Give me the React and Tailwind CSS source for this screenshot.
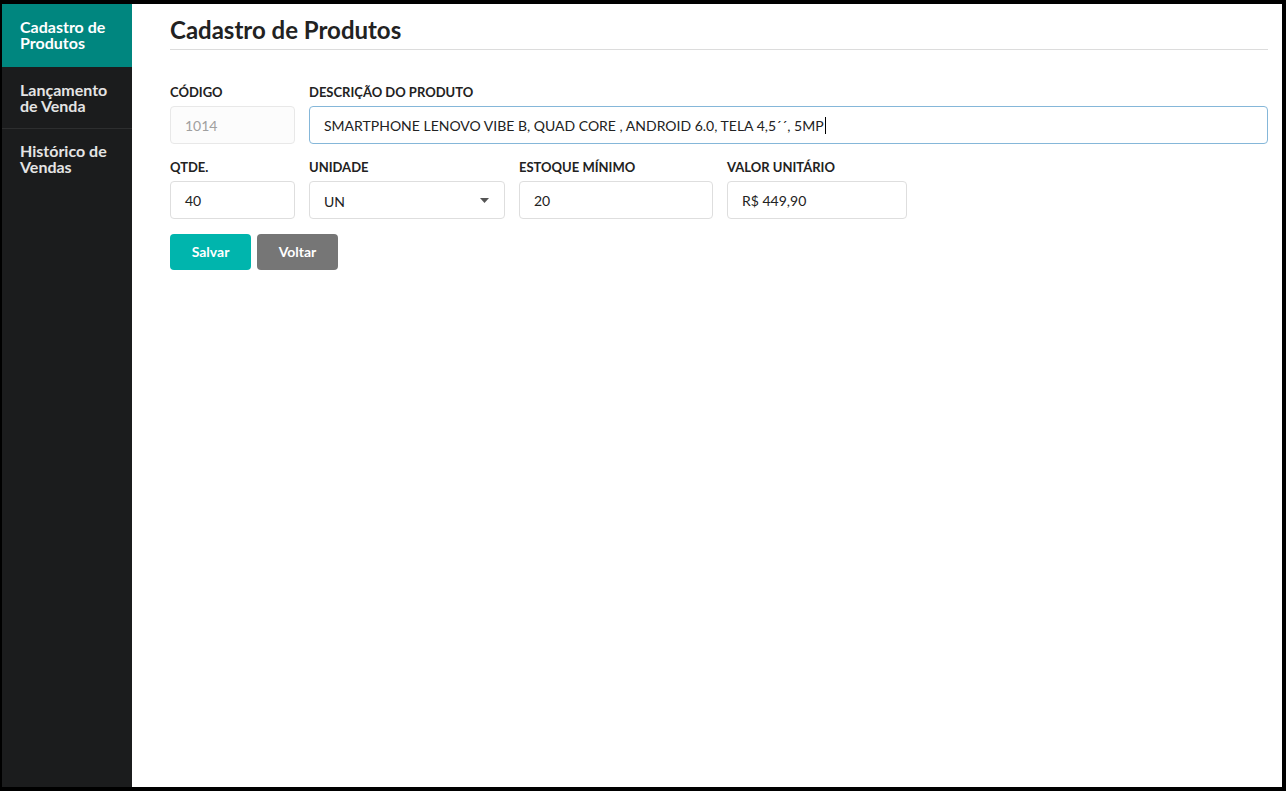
export default function App() {
  const font = { fontFamily: "Lato, 'Open Sans', sans-serif" };
  const label = "text-[13px] leading-[16px] font-bold text-[#222] mb-[6px] whitespace-nowrap";
  const input =
    "h-[38px] w-full rounded-[4px] border border-[#dedede] bg-white px-[14px] text-[14px] text-[#222] flex items-center";
  return (
    <div className="w-[1286px] h-[791px] bg-black pt-[4px] pl-[2px] pr-[4px] pb-[4px] flex" style={font}>
      <aside className="w-[130px] bg-[#1b1c1d] flex flex-col text-[16px] leading-[16px] font-bold">
        <div className="h-[63px] bg-[#00867f] text-white pt-[15px] pl-[18px]">
          Cadastro de<br />Produtos
        </div>
        <div className="h-[62px] border-b border-[#2d2e2f] text-[#e4e4e4] pt-[15px] pl-[18px]">
          Lançamento<br />de Venda
        </div>
        <div className="h-[62px] text-[#e4e4e4] pt-[14px] pl-[18px]">
          Histórico de<br />Vendas
        </div>
      </aside>
      <main className="flex-1 bg-white pl-[38px] pr-[14px] pt-[11px]">
        <h1 className="text-[24px] leading-[30px] font-bold text-[#222] pb-[4px] border-b border-[#dcdcdc]">
          Cadastro de Produtos
        </h1>
        <div className="flex gap-[14px] mt-[34px]">
          <div className="w-[125px] shrink-0">
            <div className={label}>CÓDIGO</div>
            <div className={input + " !bg-[#fcfcfc] !text-[#a0a0a0] !border-[#e8e8e8]"}>1014</div>
          </div>
          <div className="flex-1">
            <div className={label}>DESCRIÇÃO DO PRODUTO</div>
            <div className={input + " !border-[#85b7d9]"}>
              <span>SMARTPHONE LENOVO VIBE B, QUAD CORE , ANDROID 6.0, TELA 4,5´´, 5MP</span>
              <span className="inline-block w-px h-[17px] bg-black ml-[1px]" />
            </div>
          </div>
        </div>
        <div className="flex gap-[14px] mt-[15px]">
          <div className="w-[125px] shrink-0">
            <div className={label}>QTDE.</div>
            <div className={input}>40</div>
          </div>
          <div className="w-[196px] shrink-0">
            <div className={label}>UNIDADE</div>
            <div className={input + " justify-between"}>
              <span className="mt-[2px]">UN</span>
              <svg width="9" height="5" viewBox="0 0 9 5" className="mr-[1px]">
                <path d="M0 0 L9 0 L4.5 5 Z" fill="#555" />
              </svg>
            </div>
          </div>
          <div className="w-[194px] shrink-0">
            <div className={label}>ESTOQUE MÍNIMO</div>
            <div className={input}>20</div>
          </div>
          <div className="w-[180px] shrink-0">
            <div className={label}>VALOR UNITÁRIO</div>
            <div className={input}>R$ 449,90</div>
          </div>
        </div>
        <div className="flex gap-[6px] mt-[15px]">
          <button className="w-[81px] h-[36px] rounded-[4px] bg-[#00b5ad] text-white text-[14px] font-bold pb-[1px]">
            Salvar
          </button>
          <button className="w-[81px] h-[36px] rounded-[4px] bg-[#767676] text-white text-[14px] font-bold pb-[1px]">
            Voltar
          </button>
        </div>
      </main>
    </div>
  );
}
